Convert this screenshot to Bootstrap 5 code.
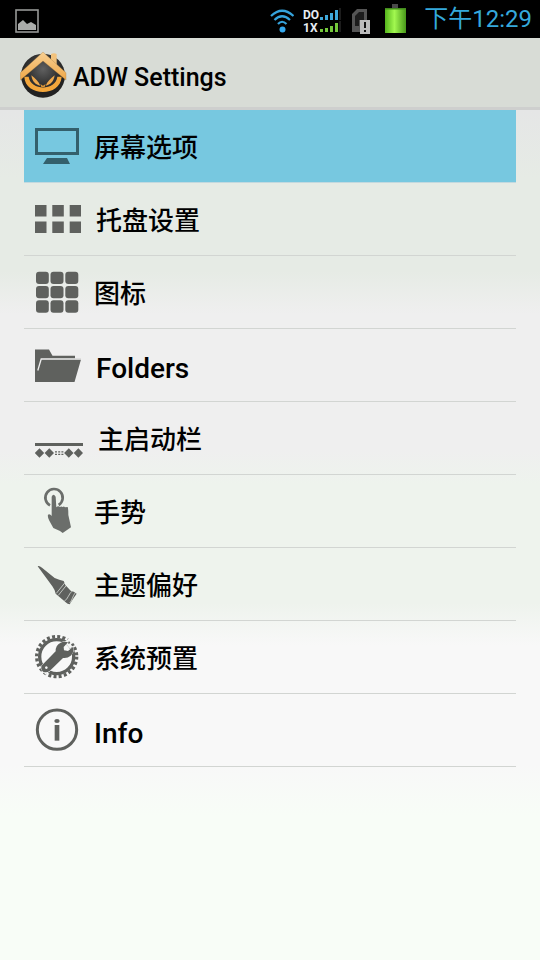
<!DOCTYPE html>
<html lang="zh-CN">
<head>
<meta charset="utf-8">
<meta name="viewport" content="width=device-width, initial-scale=1">
<title>ADW Settings</title>
<link href="https://cdn.jsdelivr.net/npm/bootstrap@5.3.0/dist/css/bootstrap.min.css" rel="stylesheet">
<style>
body { font-family: Roboto, "Noto Sans CJK SC", sans-serif; color: #000; }
svg { display: block; flex: none; }
.status-bar { height: 38px; background: #000; padding: 0 8px 0 15px; }
.status-icons { gap: 9px; }
.clock { color: #35a9dc; font-size: 24px; line-height: 38px; }
.title-bar { height: 72px; background: #d8dcd6; border-bottom: 3px solid #cecfce; padding: 4px 20px 0; gap: 5px; }
.title-bar h1 { font-size: 25px; font-weight: 500; line-height: 32px; margin: 6px 0 0; }
.settings {
  padding: 0 24px;
  background: linear-gradient(#e5e6e6 0%, #e6ebe5 8%, #e6ebe5 19%, #efefef 24%, #efefef 40%, #eef3ed 44%, #eef3ed 58%, #f8f8f8 63%, #f8f8f8 77%, #f8fdf7 83%);
}
.settings .list-group { --bs-list-group-bg: transparent; --bs-list-group-border-color: #d2d5d2; }
.settings .entry.list-group-item {
  height: 73px; padding: 0 11px; gap: 15px; color: #000;
  border-width: 0 0 1px;
}
.settings .entry.list-group-item.active { background: #77c8e0; border-color: #c3d9df; margin: 0; }
.label-zh { font-size: 26px; font-weight: 500; line-height: 36px; padding-top: 4px; }
.label-en { font-size: 28px; font-weight: 500; line-height: 36px; padding-top: 8px; }
.glyph { fill: #5f615e; }
.active .glyph { fill: #34606c; }
</style>
</head>
<body class="min-vh-100 d-flex flex-column">

<div class="status-bar d-flex align-items-center justify-content-between">
  <svg width="24" height="38" viewBox="0 0 24 38" aria-hidden="true">
    <rect x="1" y="10" width="22" height="22" fill="none" stroke="#969896" stroke-width="1.6"/>
    <path d="M3 24l5-4 4 4 4-2 5 3v5H3z" fill="#aaacaa"/>
  </svg>
  <div class="status-icons d-flex align-items-center">
    <svg width="24" height="38" viewBox="0 0 24 38" aria-hidden="true">
      <g fill="none" stroke="#35a3dc" stroke-width="2.2">
        <path d="M1 16Q12 5.500 23.500 16"/><path d="M4.500 20Q12 12.500 20 20"/><path d="M8 24Q12 19.500 16.500 24"/>
      </g>
      <circle cx="12.500" cy="29.500" r="3" fill="#35a9ee"/>
    </svg>
    <svg width="38" height="38" viewBox="0 0 38 38" aria-hidden="true">
      <g fill="#e8ecf2" font-family="Roboto, sans-serif" font-size="12" font-weight="700">
        <text x="0" y="19">DO</text><text x="0" y="32">1X</text>
      </g>
      <path d="M17 17h3v3h-3zM22 15h3v5h-3zM27 13h3v7h-3zM32 10h3v10h-3z" fill="#3fa9dc"/>
      <path d="M17 29h3v3h-3zM22 28h3v4h-3zM27 26h3v6h-3zM32 23h3v9h-3z" fill="#74c83c"/>
      <path d="M36 8h2v12h-2zM36 21h2v11h-2z" fill="#1c1c1c"/>
    </svg>
    <svg width="22" height="38" viewBox="0 0 22 38" aria-hidden="true">
      <path d="M2 32V14l5-5h10v11H10v12z" fill="#555"/>
      <path d="M5 16l4-4h5v8H9v6H5z" fill="#1c1c1c"/>
      <path d="M10 20h10v14H10z" fill="#bcbcbc"/>
      <path d="M14 22h2v6h-2zM14 30h2v2h-2z" fill="#111"/>
    </svg>
    <svg width="34" height="38" viewBox="0 0 34 38" aria-hidden="true">
      <defs><linearGradient id="charge"><stop offset="0" stop-color="#55b51c"/><stop offset=".45" stop-color="#a2f850"/><stop offset="1" stop-color="#48981a"/></linearGradient></defs>
      <path d="M11 4h6v4h-6z" fill="#4a4a4a"/>
      <path d="M4 8h21v25H4z" fill="url(#charge)"/>
      <path d="M4 8h21v1.500H4z" fill="#438a1d"/>
    </svg>
    <span class="clock">下午12:29</span>
  </div>
</div>

<header class="title-bar d-flex align-items-center">
  <svg width="48" height="48" viewBox="30 15 144 144" aria-hidden="true">
    <defs>
      <linearGradient id="roof" x2="0" y2="1"><stop offset="0" stop-color="#f7cf92"/><stop offset="1" stop-color="#f0a848"/></linearGradient>
      <radialGradient id="disc" cy=".35"><stop offset="0" stop-color="#606060"/><stop offset=".6" stop-color="#383838"/><stop offset="1" stop-color="#222"/></radialGradient>
    </defs>
    <circle cx="99" cy="89" r="66" fill="url(#disc)"/>
    <path d="M123 24q9-5 17 0v34l-17-16z" fill="#f2c27c"/>
    <path d="M99 18l69 62v22L99 45 31 102V80z" fill="url(#roof)" stroke="#a3783c" stroke-width="1"/>
    <path d="M43 92c2 60 108 62 112 0h-13c-5 43-80 43-86 0z" fill="#f3a63b"/>
    <path d="M64 88c3 19 13 29 27 31-5-12-14-20-27-31zM134 88c-3 19-13 29-27 31 5-12 14-20 27-31z" fill="#efa94d"/>
    <path d="M91 114l8 5 8-5-3 9H94z" fill="#d99438"/>
  </svg>
  <h1>ADW Settings</h1>
</header>

<main class="settings flex-grow-1">
  <nav class="list-group list-group-flush" aria-label="ADW Settings">
    <a href="#screen" class="entry list-group-item active d-flex align-items-center" aria-current="true">
      <svg class="glyph" width="44" height="48" viewBox="0 0 44 48" aria-hidden="true">
        <path fill-rule="evenodd" d="M0 6h44v27H0zM3 9v21h38V9zM12 36h20l3 6H8z"/>
      </svg>
      <span class="label-zh">屏幕选项</span>
    </a>
    <a href="#drawer" class="entry list-group-item d-flex align-items-center">
      <svg class="glyph" width="46" height="48" viewBox="0 0 46 48" aria-hidden="true">
        <path d="M0 10h11.500v11.500H0zM17.300 10h11.500v11.500H17.300zM34.700 10h11.300v11.500H34.700zM0 26.500h11.500v11.500H0zM17.300 26.500h11.500v11.500H17.300zM34.700 26.500h11.300v11.500H34.700z"/>
      </svg>
      <span class="label-zh">托盘设置</span>
    </a>
    <a href="#icons" class="entry list-group-item d-flex align-items-center">
      <svg class="glyph" width="44" height="48" viewBox="0 0 44 48" aria-hidden="true">
        <g id="tiles"><rect x="1" y="3.700" width="12.800" height="12.400" rx="3"/><rect x="15.500" y="3.700" width="13" height="12.400" rx="3"/><rect x="30.300" y="3.700" width="13" height="12.400" rx="3"/></g>
        <use href="#tiles" y="14.200"/><use href="#tiles" y="28.600"/>
      </svg>
      <span class="label-zh">图标</span>
    </a>
    <a href="#folders" class="entry list-group-item d-flex align-items-center">
      <svg class="glyph" width="46" height="48" viewBox="0 0 46 48" aria-hidden="true">
        <path d="M0 8.500h14l3.500 6.200H40V17.500H46.300L39.500 41H0z"/>
        <path d="M2.800 29.500L6.200 18H46" fill="none" stroke="#efefef" stroke-width="1.300"/>
        <path d="M41 13h6v4h-6z" fill="#efefef"/>
      </svg>
      <span class="label-en">Folders</span>
    </a>
    <a href="#dock" class="entry list-group-item d-flex align-items-center">
      <svg class="glyph" width="48" height="48" viewBox="0 0 48 48" aria-hidden="true">
        <path d="M0 29h48v3H0zM4.500 34.300l4.700 4.700-4.700 4.700L-.2 39zM14.300 34.300l4.700 4.700-4.700 4.700L9.600 39zM33.800 34.300l4.700 4.700-4.700 4.700-4.700-4.700zM43.400 34.300l4.700 4.700-4.700 4.700-4.700-4.700z"/>
        <path d="M20 37.800h8.500M20 40.300h8.500" stroke="#5f615e" stroke-width="1.200" stroke-dasharray="2 1.200"/>
      </svg>
      <span class="label-zh">主启动栏</span>
    </a>
    <a href="#gestures" class="entry list-group-item d-flex align-items-center">
      <svg class="glyph" width="44" height="48" viewBox="45 261 132 144" aria-hidden="true">
        <path d="M90 316A26 26 0 1 1 116 315" fill="none" stroke="#6b6e6b" stroke-width="8"/>
        <path d="M95 290q5-12 12 0l2 32q5-6 11-1 4-3 8 0 4-3 7 1l8-1q2 4 2 24l8 37-25 17-8-6-20-9-12-22q-6-10-4-18 6-3 11 4z" fill="#6b6e6b"/>
      </svg>
      <span class="label-zh">手势</span>
    </a>
    <a href="#themes" class="entry list-group-item d-flex align-items-center">
      <svg class="glyph" width="44" height="48" viewBox="45 30 132 144" aria-hidden="true">
        <path d="M53 49q4-3 13 4l38 31q14 6 27 9l5 12 16 17q9 2 18 9l-9 13-12 19q-6 0-12-6l-30-26q-2-11-10-22z"/>
        <g fill="none" stroke="#eef3ed" stroke-width="2"><path d="M134 99l-25 31M140 105l-25 31M158 122q-8 6-13 17t-12 14M166 128q-6 8-9 17t-8 14"/></g>
      </svg>
      <span class="label-zh">主题偏好</span>
    </a>
    <a href="#system" class="entry list-group-item d-flex align-items-center">
      <svg class="glyph" width="44" height="48" viewBox="45 249 132 144" aria-hidden="true">
        <g fill="none" stroke="#5f615e">
          <circle cx="110" cy="320" r="51" stroke-width="10"/>
          <circle cx="110" cy="320" r="60" stroke-width="10" stroke-dasharray="9 6.700"/>
        </g>
        <g fill="none" stroke="#f5f6f5"><path d="M142 269l17 19" stroke-width="24"/><path d="M69 365l21-17" stroke-width="24"/></g>
        <path d="M143 277l5-3 3 5-5 3zM153 283l7-4 4 7-8 3z"/>
        <path fill-rule="evenodd" stroke="#f5f6f5" stroke-width="3" paint-order="stroke" d="M66 346L107 304q-1-18 15-26 10-5 22-1l-13 14 1 10 12 2 16-13q3 16-8 27-10 9-23 7l-40 39q-10 7-20 2-9-8-3-19zM79 349a4 4 0 1 0 .1 0z"/>
      </svg>
      <span class="label-zh">系统预置</span>
    </a>
    <a href="#info" class="entry list-group-item d-flex align-items-center">
      <svg class="glyph" width="44" height="48" viewBox="45 468 132 144" aria-hidden="true">
        <circle cx="111" cy="539" r="59" fill="none" stroke="#5f615e" stroke-width="9"/>
        <ellipse cx="111" cy="513" rx="8" ry="6"/><path d="M104 525h14v47h-14z"/>
      </svg>
      <span class="label-en">Info</span>
    </a>
  </nav>
</main>

<script src="https://cdn.jsdelivr.net/npm/bootstrap@5.3.0/dist/js/bootstrap.bundle.min.js"></script>
</body>
</html>
